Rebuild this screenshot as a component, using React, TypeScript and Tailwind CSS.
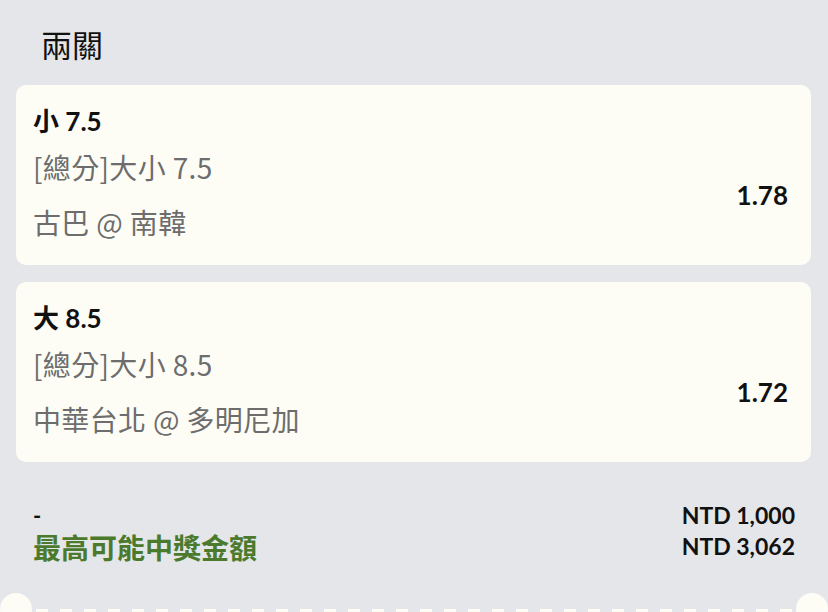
import React from "react";

const latin = "font-['Lato','Noto_Sans_CJK_TC',sans-serif]";
const cjk = "font-['Noto_Sans_CJK_TC','Noto_Sans',sans-serif]";

type Leg = { pick: string; market: string; teams: string; odds: string };

const legs: Leg[] = [
  { pick: "小 7.5", market: "[總分]大小 7.5", teams: "古巴 @ 南韓", odds: "1.78" },
  { pick: "大 8.5", market: "[總分]大小 8.5", teams: "中華台北 @ 多明尼加", odds: "1.72" },
];

function LegCard({ leg }: { leg: Leg }) {
  return (
    <div className="rounded-[10px] bg-[#fdfdf6] pl-[17px] pr-[23px] pt-[20px] pb-[27px]">
      <div className="text-[26px] leading-[32px] font-bold text-[#111111]">{leg.pick}</div>
      <div className="flex items-center justify-between">
        <div className="flex flex-col">
          <div className={`${cjk} mt-[14px] text-[28px] leading-[32px] tracking-[0.35px] text-[#6d6d6d]`}>{leg.market}</div>
          <div className={`${cjk} mt-[23px] text-[28px] leading-[32px] tracking-[0.35px] text-[#6d6d6d]`}>{leg.teams}</div>
        </div>
        <div className="mt-[14px] text-[26px] leading-[32px] font-bold text-[#111111]">{leg.odds}</div>
      </div>
    </div>
  );
}

export default function App() {
  return (
    <div className={`${latin} w-[828px] h-[612px] overflow-hidden bg-[#e4e6e9] flex flex-col`}>
      <div className="px-[41px] pt-[25px] text-[31px] leading-[40px] text-[#111111]">兩關</div>
      <div className="mt-[20px] pl-[16px] pr-[17px] flex flex-col gap-[17px]">
        {legs.map((l) => (
          <LegCard key={l.pick} leg={l} />
        ))}
      </div>
      <div className="mt-[38px] px-[33px] flex justify-between">
        <div className="flex flex-col">
          <div className="text-[22px] leading-[32px] font-bold text-[#111111]">-</div>
          <div className="text-[28px] leading-[32px] font-bold text-[#4b7a2d]">最高可能中獎金額</div>
        </div>
        <div className="flex flex-col items-end">
          <div className="text-[23px] leading-[31px] font-bold text-[#111111]">NTD 1,000</div>
          <div className="text-[23px] leading-[31px] font-bold text-[#111111]">NTD 3,062</div>
        </div>
      </div>
      <div className="mt-[29px] flex h-[19px] items-start">
        <div className="w-[32px] h-[32px] shrink-0 rounded-full bg-[#fdfdf6]" />
        <div className="flex-1 self-end h-[3px] ml-[4px] mr-[4px] bg-[repeating-linear-gradient(90deg,#fdfdf6_0_12px,transparent_12px_24px)]" />
        <div className="w-[32px] h-[32px] shrink-0 rounded-full bg-[#fdfdf6]" />
      </div>
    </div>
  );
}
